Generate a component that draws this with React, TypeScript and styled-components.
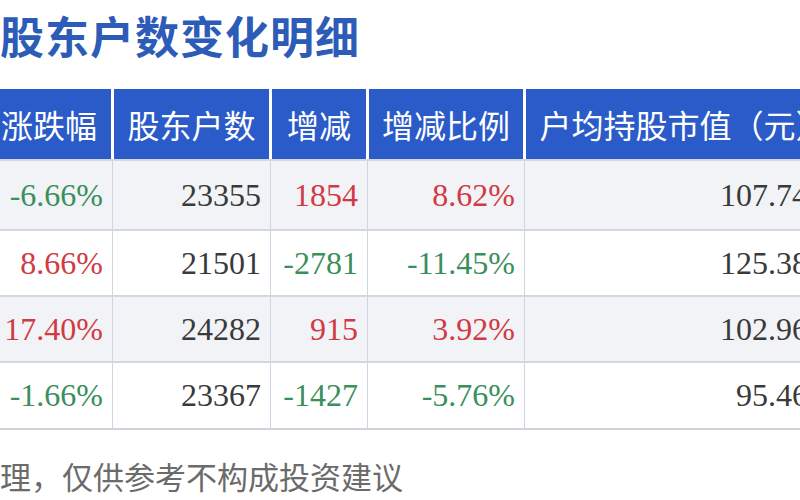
import styled, { createGlobalStyle } from "styled-components";

const GlobalStyle = createGlobalStyle`
  html, body {
    margin: 0;
    padding: 0;
    background: #ffffff;
    overflow: hidden;
  }
  body {
    width: 800px;
    height: 500px;
    font-family: "Noto Sans CJK SC", "Noto Sans", sans-serif;
  }
`;

const Page = styled.div`
  width: 800px;
  height: 500px;
  overflow: hidden;
`;

const Title = styled.h1`
  margin: 0;
  height: 89px;
  font-size: 44px;
  line-height: 70px;
  font-weight: 700;
  color: #2d5cb8;
  letter-spacing: 1px;
  white-space: nowrap;
`;

// the screenshot is a crop: first and last columns run past the edges
const COLS = "157px 158px 97px 157px 318px";

const Table = styled.div`
  margin-left: -45px;
  width: 887px;
  border-bottom: 2px solid #cfd3da;
`;

const HeaderRow = styled.div`
  display: grid;
  grid-template-columns: ${COLS};
  height: 70px;
`;

const HeaderCell = styled.div<{ $first?: boolean }>`
  background: #2a5bc9;
  color: #ffffff;
  font-size: 32px;
  display: flex;
  align-items: center;
  justify-content: center;
  white-space: nowrap;
  border-left: ${(p) => (p.$first ? "0" : "2px solid #fff")};
  border-right: 1px solid #fff;
`;

const Row = styled.div<{ $shaded: boolean; $h: number }>`
  display: grid;
  grid-template-columns: ${COLS};
  height: ${(p) => p.$h}px;
  background: ${(p) => (p.$shaded ? "#f2f3f6" : "#ffffff")};
  border-top: 2px solid #d3d7de;
  box-sizing: border-box;
`;

type Tone = "up" | "down" | "plain";

const Cell = styled.div<{ $tone: Tone; $first?: boolean; $pad?: number }>`
  display: flex;
  align-items: center;
  justify-content: flex-end;
  padding-right: ${(p) => p.$pad ?? 9}px;
  font-family: "Liberation Serif", "Times New Roman", serif;
  font-size: 32px;
  white-space: nowrap;
  border-left: ${(p) => (p.$first ? "0" : "1px solid #cdd6e4")};
  color: ${(p) =>
    p.$tone === "up" ? "#d13a44" : p.$tone === "down" ? "#3a8f5c" : "#3a3a3a"};
`;

const Note = styled.p`
  margin: 26px 0 0 0;
  font-size: 31px;
  line-height: 40px;
  color: #6b6b6b;
  white-space: nowrap;
`;

const tone = (v: string): Tone => (v.startsWith("-") ? "down" : "up");

const rows = [
  { chg: "-6.66%", holders: "23355", diff: "1854", ratio: "8.62%", avg: "107.74", h: 70 },
  { chg: "8.66%", holders: "21501", diff: "-2781", ratio: "-11.45%", avg: "125.38", h: 66 },
  { chg: "17.40%", holders: "24282", diff: "915", ratio: "3.92%", avg: "102.96", h: 66 },
  { chg: "-1.66%", holders: "23367", diff: "-1427", ratio: "-5.76%", avg: "95.46", h: 67 },
];

export default function App() {
  return (
    <Page>
      <GlobalStyle />
      <Title>股东户数变化明细</Title>
      <Table>
        <HeaderRow>
          <HeaderCell $first>日涨跌幅</HeaderCell>
          <HeaderCell>股东户数</HeaderCell>
          <HeaderCell>增减</HeaderCell>
          <HeaderCell>增减比例</HeaderCell>
          <HeaderCell>户均持股市值（元）</HeaderCell>
        </HeaderRow>
        {rows.map((r, i) => (
          <Row key={r.holders} $shaded={i % 2 === 0} $h={r.h}>
            <Cell $first $tone={tone(r.chg)}>{r.chg}</Cell>
            <Cell $tone="plain">{r.holders}</Cell>
            <Cell $tone={tone(r.diff)}>{r.diff}</Cell>
            <Cell $tone={tone(r.ratio)}>{r.ratio}</Cell>
            <Cell $tone="plain" $pad={34}>{r.avg}</Cell>
          </Row>
        ))}
      </Table>
      <Note>理，仅供参考不构成投资建议</Note>
    </Page>
  );
}
